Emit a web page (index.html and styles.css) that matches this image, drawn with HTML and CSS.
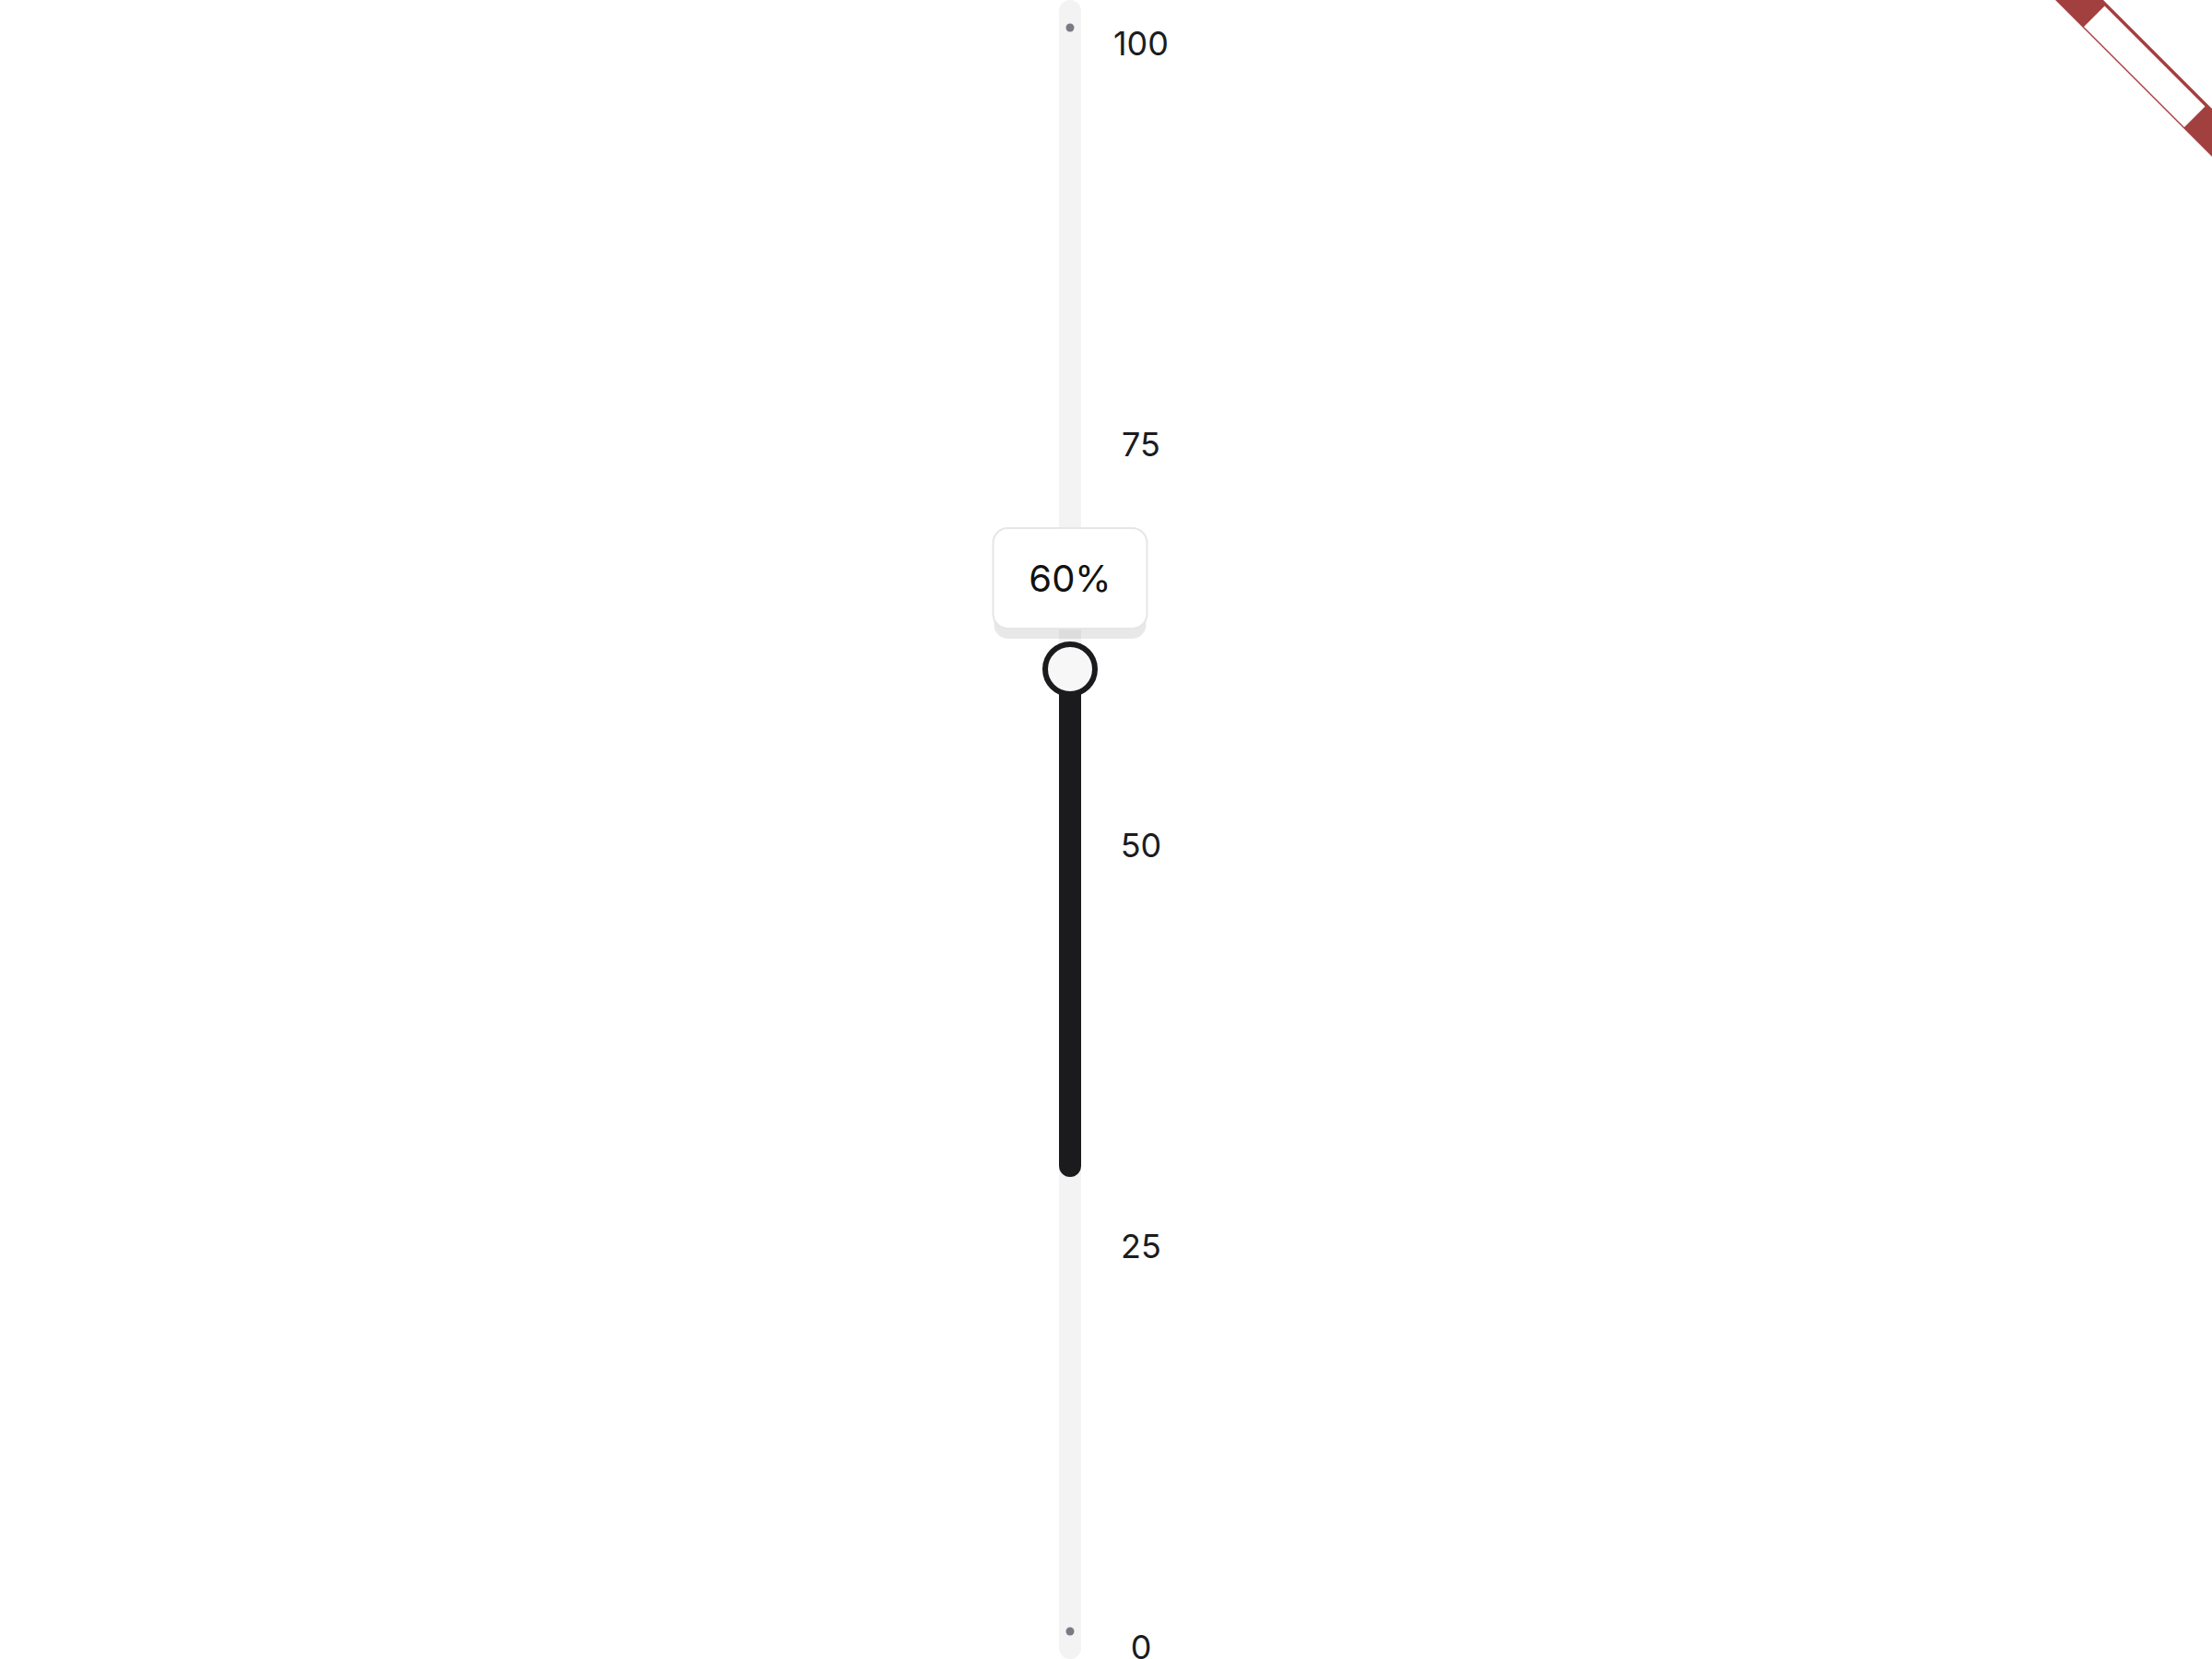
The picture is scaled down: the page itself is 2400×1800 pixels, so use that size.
FILE: index.html
```html
<!DOCTYPE html>
<html lang="en">
<head>
    <meta charset="UTF-8">
    <meta name="viewport" content="width=device-width, initial-scale=1.0">
    <title>Vertical Slider</title>
    <link rel="stylesheet" href="styles.css">
</head>
<body>
    <main class="stage">
        <div class="slider">
            <div class="track">
                <div class="scale">
                    <span class="dot" style="top: 0%"></span>
                    <span class="dot" style="top: 100%"></span>
                    <div class="range" style="top: 40%; height: 31.67%"></div>
                    <div class="thumb" style="top: 40%">
                        <div class="tip">60%</div>
                    </div>
                </div>
            </div>
            <div class="labels">
                <ol class="scale">
                    <li style="top: 0%">100</li>
                    <li style="top: 25%">75</li>
                    <li style="top: 50%">50</li>
                    <li style="top: 75%">25</li>
                    <li style="top: 100%">0</li>
                </ol>
            </div>
        </div>
    </main>

    <a class="ribbon" href="#" aria-label="ribbon">
        <svg width="200" height="180" viewBox="0 0 200 180">
            <polygon points="30,0 82,0 200,118 200,170" fill="#a2403f"/>
            <polygon points="83.5,6.5 192.5,115.5 170,138 61,29" fill="#ffffff"/>
        </svg>
    </a>
</body>
</html>
```

FILE: styles.css
```css
html, body {
    margin: 0;
    height: 100%;
}
body {
    background: #fff;
    font-family: Inter, "Noto Sans", sans-serif;
    color: #1c1c1e;
    overflow: hidden;
}
.stage {
    display: flex;
    padding-left: 1149px;
}
.slider {
    display: flex;
    height: 1800px;
}
.track {
    position: relative;
    width: 24px;
    height: 100%;
    background: #f3f3f4;
    border-radius: 12px;
}
.scale {
    position: absolute;
    top: 30px;
    bottom: 30px;
    left: 0;
    right: 0;
    margin: 0;
    padding: 0;
    list-style: none;
}
.dot {
    position: absolute;
    left: 50%;
    width: 9px;
    height: 9px;
    border-radius: 50%;
    background: #7b7a84;
    transform: translate(-50%, -50%);
}
.range {
    position: absolute;
    left: 0;
    right: 0;
    background: #1b1b1d;
    border-radius: 0 0 12px 12px;
}
.thumb {
    position: absolute;
    left: 50%;
    width: 60px;
    height: 60px;
    box-sizing: border-box;
    border: 6px solid #1b1b1d;
    border-radius: 50%;
    background: #f7f7f7;
    transform: translate(-50%, -50%);
}
.tip {
    position: absolute;
    left: 50%;
    bottom: calc(100% + 19px);
    width: 169px;
    height: 111px;
    box-sizing: border-box;
    display: flex;
    align-items: center;
    justify-content: center;
    background: #fff;
    border: 2px solid #e6e6e6;
    border-radius: 17px;
    box-shadow: 0 12px 0 -2px rgba(0, 0, 0, 0.09);
    font-size: 40px;
    line-height: 1;
    color: #111;
    transform: translateX(-50%);
}
.labels {
    position: relative;
    width: 130px;
    height: 100%;
}
.labels li {
    position: absolute;
    left: 0;
    right: 0;
    margin-top: 17px;
    text-align: center;
    font-size: 36px;
    line-height: 1;
    transform: translateY(-50%);
}
.ribbon {
    position: absolute;
    top: 0;
    right: 0;
    line-height: 0;
}
```
